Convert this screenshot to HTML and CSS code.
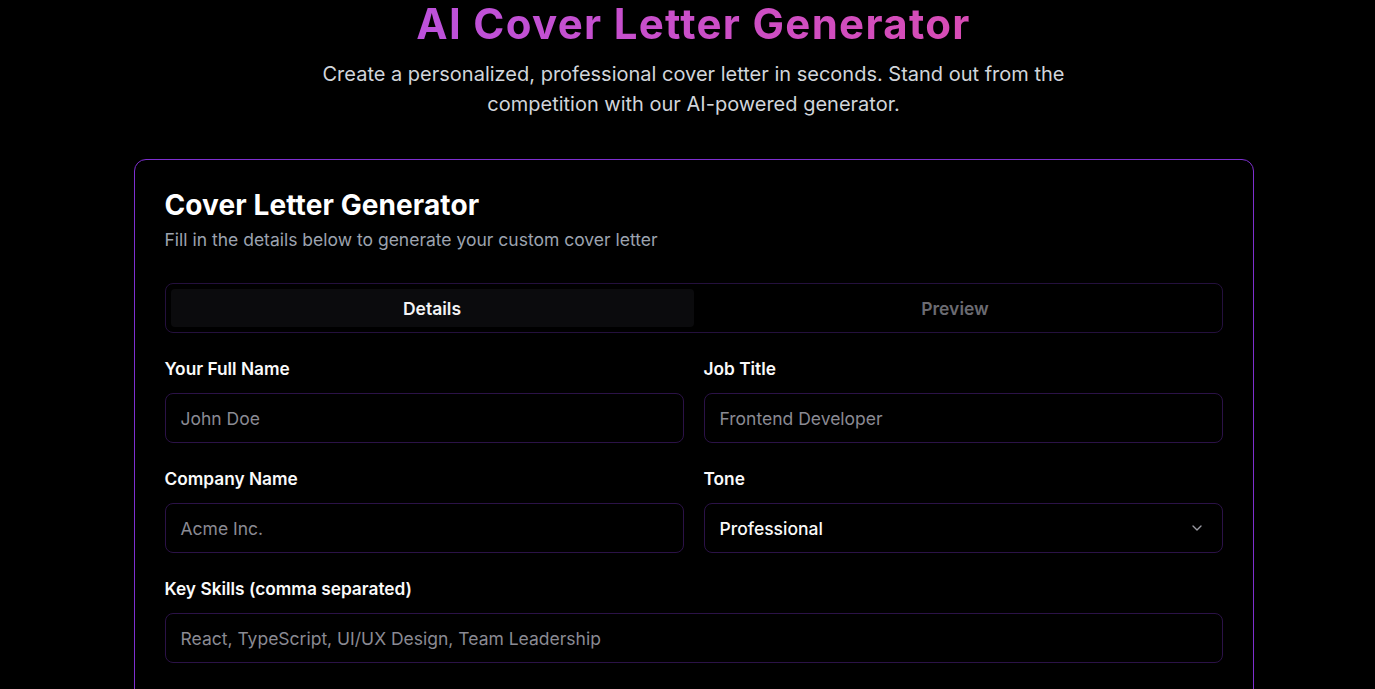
FILE: index.html
```html
<!DOCTYPE html>
<html lang="en">
<head>
<meta charset="utf-8">
<title>AI Cover Letter Generator</title>
<link rel="stylesheet" href="styles.css">
</head>
<body>
<div class="page">
  <header class="hero">
    <h1 class="hero-title">AI Cover Letter Generator</h1>
    <p class="hero-sub">Create a personalized, professional cover letter in seconds. Stand out from the competition with our AI-powered generator.</p>
  </header>

  <section class="card">
    <h2 class="card-title">Cover Letter Generator</h2>
    <p class="card-desc">Fill in the details below to generate your custom cover letter</p>

    <div class="tabs">
      <button class="tab tab-active">Details</button>
      <button class="tab">Preview</button>
    </div>

    <form class="form">
      <div class="field">
        <label class="label">Your Full Name</label>
        <div class="input"><span class="placeholder">John Doe</span></div>
      </div>
      <div class="field">
        <label class="label">Job Title</label>
        <div class="input"><span class="placeholder">Frontend Developer</span></div>
      </div>
      <div class="field">
        <label class="label">Company Name</label>
        <div class="input"><span class="placeholder">Acme Inc.</span></div>
      </div>
      <div class="field">
        <label class="label">Tone</label>
        <div class="input select">
          <span class="value">Professional</span>
          <svg class="chevron" width="16" height="16" viewBox="0 0 24 24" fill="none" stroke="currentColor" stroke-width="2" stroke-linecap="round" stroke-linejoin="round"><path d="m6 9 6 6 6-6"/></svg>
        </div>
      </div>
      <div class="field field-wide">
        <label class="label">Key Skills (comma separated)</label>
        <div class="input"><span class="placeholder">React, TypeScript, UI/UX Design, Team Leadership</span></div>
      </div>
    </form>
  </section>
</div>
</body>
</html>
```

FILE: styles.css
```css
* { box-sizing: border-box; }
html, body { margin: 0; padding: 0; background: #000; }
body {
  font-family: Inter, "Noto Sans", "Liberation Sans", sans-serif;
  color: #fff;
  overflow: hidden;
}
.page {
  padding-left: 12px;
}
.hero {
  text-align: center;
}
.hero-title {
  margin: 0;
  font-size: 42px;
  line-height: 48px;
  font-weight: 700;
  letter-spacing: 1.3px;
  background: linear-gradient(90deg, #a855f7, #ec4899);
  -webkit-background-clip: text;
  background-clip: text;
  color: transparent;
}
.hero-sub {
  margin: 11px auto 0;
  max-width: 768px;
  font-size: 20px;
  line-height: 30px;
  color: #d1d5db;
}
.card {
  width: 1120px;
  margin: 40px auto 0;
  border: 1px solid #7e2fd0;
  border-radius: 12px;
  padding: 27px 30px 40px;
}
.card-title {
  margin: 0;
  font-size: 28px;
  line-height: 36px;
  font-weight: 700;
  letter-spacing: 0.1px;
}
.card-desc {
  margin: 5px 0 0;
  font-size: 17.5px;
  line-height: 24px;
  color: #9ca3af;
}
.tabs {
  margin-top: 31px;
  display: grid;
  grid-template-columns: 1fr 1fr;
  padding: 5px;
  border: 1px solid #24103d;
  border-radius: 8px;
}
.tab {
  font-family: inherit;
  border: 0;
  background: transparent;
  height: 38px;
  border-radius: 4px;
  font-size: 17.5px;
  font-weight: 600;
  color: #6b6b72;
}
.tab-active {
  background: #0b0b0d;
  color: #f4f4f5;
}
.form {
  margin-top: 24px;
  display: grid;
  grid-template-columns: 1fr 1fr;
  column-gap: 20px;
  row-gap: 24px;
}
.field-wide { grid-column: 1 / -1; }
.label {
  display: block;
  font-size: 17.3px;
  line-height: 24px;
  font-weight: 600;
  color: #fafafa;
}
.input {
  margin-top: 12px;
  height: 50px;
  border: 1px solid #2b1247;
  border-radius: 8px;
  padding: 0 15px;
  display: flex;
  align-items: center;
  justify-content: space-between;
  font-size: 17.5px;
}
.placeholder { color: #8a8a93; }
.value { color: #fafafa; font-weight: 500; }
.chevron { color: #9a9aa2; margin-right: 2px; }
```
